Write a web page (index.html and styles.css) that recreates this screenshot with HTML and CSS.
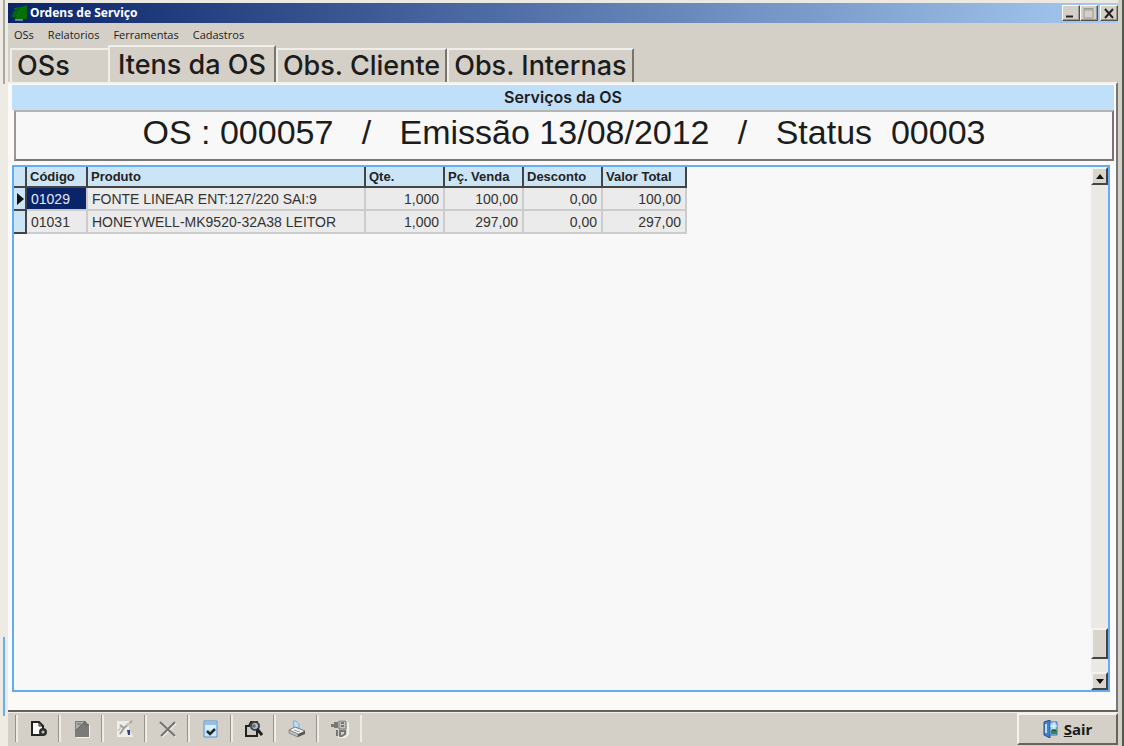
FILE: index.html
```html
<!DOCTYPE html>
<html lang="pt-BR">
<head>
    <meta charset="UTF-8">
    <meta name="viewport" content="width=device-width, initial-scale=1.0">
    <title>Ordens de Serviço</title>
    <link rel="stylesheet" href="styles.css">
</head>
<body>
    <div class="gutter">
        <div class="gutter-top"></div>
        <div class="gutter-mark"></div>
    </div>
    <div class="window">
        <header class="titlebar">
            <svg class="app-icon" width="16" height="16" viewBox="0 0 16 16">
                <path d="M2 3 L9 2 L15 0 V14 H11 L9 15 H4 L3 12 H0 L1 7 L3 6 Z" fill="#087008"/>
                <path d="M4 4 V9 M1 8 L4 12 M7 3 L5 6" stroke="#064b18" fill="none"/>
                <path d="M3 15 H11" stroke="#c8cbb8"/>
            </svg>
            <h1>Ordens de Serviço</h1>
            <div class="window-controls">
                <button type="button" aria-label="Minimizar"><svg width="14" height="12" viewBox="0 0 14 12"><path d="M3 9.500 H10" stroke="#222" stroke-width="2"/></svg></button>
                <button type="button" aria-label="Maximizar"><svg width="14" height="12" viewBox="0 0 14 12"><path d="M3 1.500 H12 V11 H3 Z M3 3 H12" stroke="#99968f" fill="none"/></svg></button>
                <button type="button" class="close" aria-label="Fechar"><svg width="14" height="12" viewBox="0 0 14 12"><path d="M4 2 L12 11 M12 2 L4 11" stroke="#222" stroke-width="2"/></svg></button>
            </div>
        </header>

        <nav class="menu">
            <button type="button">OSs</button>
            <button type="button">Relatorios</button>
            <button type="button">Ferramentas</button>
            <button type="button">Cadastros</button>
        </nav>

        <div class="tabs" role="tablist">
            <button type="button" class="tab tab-first" role="tab">OSs</button>
            <button type="button" class="tab active" role="tab" aria-selected="true">Itens da OS</button>
            <button type="button" class="tab" role="tab">Obs. Cliente</button>
            <button type="button" class="tab" role="tab">Obs. Internas</button>
        </div>

        <main class="page">
            <h2 class="section-title">Serviços da OS</h2>
            <div class="os-info">OS : 000057   /   Emissão 13/08/2012   /   Status  00003</div>

            <div class="grid">
                <div class="grid-view">
                    <table>
                        <colgroup>
                            <col class="col-mark">
                            <col class="col-codigo">
                            <col class="col-produto">
                            <col class="col-valor">
                            <col class="col-valor">
                            <col class="col-valor">
                            <col class="col-total">
                        </colgroup>
                        <thead>
                            <tr>
                                <th></th>
                                <th>Código</th>
                                <th>Produto</th>
                                <th>Qte.</th>
                                <th>Pç. Venda</th>
                                <th>Desconto</th>
                                <th>Valor Total</th>
                            </tr>
                        </thead>
                        <tbody>
                            <tr>
                                <td class="mark"><svg width="7" height="12" viewBox="0 0 7 12"><path d="M0 0 L7 6 L0 12 Z" fill="#111"/></svg></td>
                                <td class="selected">01029</td>
                                <td>FONTE LINEAR ENT:127/220 SAI:9</td>
                                <td class="num">1,000</td>
                                <td class="num">100,00</td>
                                <td class="num">0,00</td>
                                <td class="num">100,00</td>
                            </tr>
                            <tr>
                                <td class="mark"></td>
                                <td>01031</td>
                                <td>HONEYWELL-MK9520-32A38 LEITOR</td>
                                <td class="num">1,000</td>
                                <td class="num">297,00</td>
                                <td class="num">0,00</td>
                                <td class="num">297,00</td>
                            </tr>
                        </tbody>
                    </table>
                </div>
                <div class="scrollbar">
                    <button type="button" aria-label="Subir"><svg width="8" height="5" viewBox="0 0 8 5"><path d="M4 0 L8 5 H0 Z" fill="#111"/></svg></button>
                    <div class="track"><div class="thumb"></div></div>
                    <button type="button" aria-label="Descer"><svg width="8" height="5" viewBox="0 0 8 5"><path d="M0 0 H8 L4 5 Z" fill="#111"/></svg></button>
                </div>
            </div>
        </main>

        <footer class="toolbar">
            <div class="tools">
                <button type="button" aria-label="Novo"><svg width="18" height="18" viewBox="0 0 18 18">
                    <path d="M2 2 H9 L13 6 V15 H2 Z" fill="#fafafa" stroke="#222" stroke-width="2"/>
                    <path d="M9 2 V6 H13" fill="none" stroke="#222"/>
                    <circle cx="13" cy="12" r="4" fill="#2c2f2c"/>
                    <circle cx="13" cy="12" r="1.500" fill="#b9c2b4"/>
                </svg></button>
                <button type="button" aria-label="Alterar"><svg width="18" height="18" viewBox="0 0 18 18">
                    <path d="M2 1 H12 L16 5 V17 H2 Z" fill="#7b7b7b"/>
                    <path d="M3 2 H11 L3 10 Z" fill="#b3b0aa"/>
                    <path d="M4 4 H8 M3 10 L12 2 M12 1 V5 H16" stroke="#666" fill="none"/>
                    <path d="M16.500 5 V17.500 H3" stroke="#f4f2ee" fill="none"/>
                </svg></button>
                <button type="button" aria-label="Gravar"><svg width="18" height="18" viewBox="0 0 18 18">
                    <path d="M1 1 H15 L13 5 V10 L17 16 V17 H1 Z" fill="#eeeeec"/>
                    <path d="M4 5 L8 8 L16 1 M8 8 L4 14" stroke="#a49d92" stroke-width="2" fill="none"/>
                    <path d="M10 5 L14 3 M5 7 L2 11" stroke="#d2cbbc" stroke-width="2"/>
                    <path d="M11 10 L14 10 V15 H12 Z" fill="#343d8e"/>
                </svg></button>
                <button type="button" aria-label="Excluir"><svg width="18" height="18" viewBox="0 0 18 18">
                    <path d="M2 3 L17 17 M17 3 L3 17" stroke="#f1efea" stroke-width="2"/>
                    <path d="M1 2 L16 16 M16 2 L2 16" stroke="#737373" stroke-width="2"/>
                </svg></button>
                <button type="button" aria-label="Confirmar"><svg width="18" height="18" viewBox="0 0 18 18">
                    <path d="M2 1 H15 V17 H2 Z" fill="#c9e5ff" stroke="#5e8fc5"/>
                    <path d="M3 2 H14 V5 H3 Z" fill="#8dc1f5"/>
                    <path d="M4 6 H13 M4 8 H13" stroke="#f3faff"/>
                    <path d="M5 11 L8 14 L13 9" stroke="#1e2c24" stroke-width="2.500" fill="none"/>
                </svg></button>
                <button type="button" aria-label="Pesquisar"><svg width="18" height="18" viewBox="0 0 18 18">
                    <path d="M1 6 H4 L6 2 H12 V16 H1 Z" fill="#cecbc5" stroke="#222" stroke-width="2"/>
                    <circle cx="10" cy="6" r="4" fill="#abc0d8" stroke="#444" stroke-width="2"/>
                    <path d="M7 6 H11 M9 4 V8" stroke="#555"/>
                    <path d="M12 9 L17 15" stroke="#222" stroke-width="3"/>
                </svg></button>
                <button type="button" aria-label="Imprimir"><svg width="18" height="18" viewBox="0 0 18 18">
                    <path d="M5 1 H8 L11 4 V8 H6 Z" fill="#b7dcff" stroke="#75afe4"/>
                    <path d="M1 10 L7 7 L17 11 L11 15 Z" fill="#efefed" stroke="#777"/>
                    <path d="M1 10 V13 L10 17 V14 Z" fill="#c4c4c0" stroke="#888"/>
                    <path d="M10 14 L17 11 V14 L10 17 Z" fill="#555"/>
                    <path d="M6 10 L12 12" stroke="#999"/>
                </svg></button>
                <button type="button" aria-label="Transferir"><svg width="18" height="18" viewBox="0 0 18 18">
                    <path d="M8 1 H15 L17 4 V14 L14 17 H7" fill="none" stroke="#f2f0ec" stroke-width="2"/>
                    <path d="M0 4 H3 V2 H7 V8 H3 V7 H0 Z" fill="#777"/>
                    <path d="M8 1 H15 V9 H8 Z" fill="#c5c3be" stroke="#777"/>
                    <path d="M10 3 H13 M10 6 H13 M6 10 V16 M9 11 H14 V14 L11 16 H9 Z" fill="none" stroke="#777" stroke-width="2"/>
                </svg></button>
            </div>
            <button type="button" class="exit">
                <svg width="16" height="18" viewBox="0 0 16 18">
                    <path d="M1 2 L7 0 V18 L1 15 Z" fill="#477fbf" stroke="#244f91"/>
                    <path d="M7 2 H14 V15 H7 Z" fill="#a8d6fb" stroke="#3670b4"/>
                    <path d="M3 4 V13" stroke="#b9dfff" stroke-width="2"/>
                    <path d="M11 2 V9 M7 6 H14" stroke="#eef9ff"/>
                    <path d="M8 10 H14 V14 H8 Z" fill="#39864c"/>
                    <path d="M9 10 H13" stroke="#222"/>
                </svg>
                <span><u>S</u>air</span>
            </button>
        </footer>
    </div>
    <div class="edge"></div>
</body>
</html>
```
FILE: styles.css
```css
* {
    box-sizing: border-box;
}

body {
    margin: 0;
    height: 100vh;
    display: flex;
    background-color: #d4d0c8;
    color: #1c1c1c;
    font-family: "Liberation Sans", Arial, sans-serif;
    font-size: 14px;
    overflow: hidden;
}

button {
    margin: 0;
    padding: 0;
    border: none;
    background: none;
    color: inherit;
    font: inherit;
}

h1, h2 {
    margin: 0;
}

svg {
    display: block;
    flex-shrink: 0;
}

/* Strip of the window behind */
.gutter {
    flex: 0 0 8px;
    display: flex;
    flex-direction: column;
    justify-content: space-between;
    background-color: #eeebe5;
    padding-bottom: 30px;
}

.gutter-top {
    width: 5px;
    height: 84px;
    border-right: 2px solid #aaa7a0;
}

.gutter-mark {
    width: 5px;
    height: 79px;
    border-right: 2px solid #68aef5;
}

.edge {
    flex: 0 0 6px;
    background-color: #d4d0c8;
    border-right: 2px solid #555;
}

.window {
    flex: 1;
    min-width: 0;
    display: flex;
    flex-direction: column;
    border-top: 3px solid #ece9e3;
}

.titlebar {
    height: 20px;
    display: flex;
    align-items: center;
    gap: 2px;
    padding: 0 0 0 4px;
    background: linear-gradient(to right, #0a246a, #a6caf0);
    color: #fff;
}

.titlebar h1 {
    flex: 1;
    font-family: "Noto Sans", "Open Sans", sans-serif;
    font-size: 12px;
    line-height: 20px;
}

.window-controls {
    display: flex;
}

.window-controls button {
    width: 18px;
    height: 16px;
    background-color: #d4d0c8;
    border: 1px solid;
    border-color: #fff #55524d #55524d #fff;
    box-shadow: inset -1px -1px #99968f;
}

.window-controls .close {
    margin-left: 2px;
}

.menu {
    height: 22px;
    display: flex;
    gap: 14px;
    padding: 0 6px;
    font-family: "Open Sans", "Noto Sans", sans-serif;
    font-size: 11px;
    font-weight: 500;
}

.tabs {
    height: 37px;
    display: flex;
    align-items: flex-end;
    padding-left: 2px;
    font-family: Inter, "Liberation Sans", sans-serif;
    font-size: 27px;
    font-weight: 500;
}

.tab {
    height: 34px;
    padding: 0 5px;
    border-top: 2px solid #f0eee9;
    border-left: 2px solid #f0eee9;
    border-right: 2px solid #77746e;
    line-height: 30px;
    text-align: left;
    white-space: nowrap;
}

.tab-first {
    width: 98px;
    border-right: none;
}

.tab.active {
    height: 37px;
    padding: 0 8px;
}

.page {
    flex: 1;
    min-height: 0;
    display: flex;
    flex-direction: column;
    padding: 1px 2px 18px 4px;
    background-color: #fbfaf8;
    border-top: 2px solid #f4f2ee;
    border-right: 2px solid #777;
}

.section-title {
    flex: 0 0 25px;
    background-color: #c0dff8;
    font-family: Inter, "Liberation Sans", sans-serif;
    font-size: 16px;
    font-weight: 600;
    line-height: 25px;
    text-align: center;
}

.os-info {
    flex: 0 0 51px;
    margin: 0 0 4px 2px;
    background-color: #f8f8f8;
    border: 2px solid #777;
    border-top-color: #b6b4b0;
    border-left-color: #9a9893;
    font-size: 34px;
    line-height: 40px;
    text-align: center;
    white-space: pre;
}

.grid {
    flex: 1;
    min-height: 0;
    display: flex;
    margin-right: 4px;
    border: 2px solid #62adf5;
    background-color: #f8f8f8;
}

.grid-view {
    flex: 1;
    overflow: hidden;
}

table {
    width: 673px;
    table-layout: fixed;
    border-collapse: separate;
    border-spacing: 0;
    color: #333;
    font-size: 14px;
    white-space: nowrap;
}

.col-mark {
    width: 13px;
}

.col-codigo {
    width: 61px;
}

.col-produto {
    width: 278px;
}

.col-valor {
    width: 79px;
}

.col-total {
    width: 84px;
}

th {
    height: 21px;
    padding: 0 3px;
    background-color: #cce5f6;
    border-right: 2px solid #444;
    border-bottom: 2px solid #444;
    color: #222;
    font-size: 13px;
    line-height: 18px;
    text-align: left;
}

td {
    height: 23px;
    padding: 0 4px;
    background-color: #ebebeb;
    border-right: 2px solid #ccc;
    border-bottom: 2px solid #ccc;
    line-height: 20px;
}

td.selected {
    background-color: #0a246a;
    color: #e4eaf7;
}

td.num {
    text-align: right;
}

td.mark {
    padding: 0 0 0 3px;
    background-color: #cce5f6;
    border-color: #444;
}

/* Scrollbar */
.scrollbar {
    width: 17px;
    display: flex;
    flex-direction: column;
    background-color: #ebe9e5;
}

.scrollbar button,
.thumb {
    background-color: #d9d5cd;
    border: 2px solid;
    border-color: #f5f3ef #444 #444 #f5f3ef;
}

.scrollbar button {
    height: 18px;
    display: flex;
    align-items: center;
    justify-content: center;
}

.track {
    flex: 1;
    display: flex;
    flex-direction: column;
    justify-content: flex-end;
    padding-bottom: 13px;
}

.thumb {
    height: 31px;
}

.toolbar {
    height: 36px;
    display: flex;
    justify-content: space-between;
    border-top: 2px solid #66635e;
    box-shadow: inset 0 1px #f0eee9;
}

.tools {
    display: flex;
    padding: 3px 0 4px 8px;
}

.tools button {
    width: 43px;
    display: flex;
    align-items: center;
    justify-content: center;
    border-left: 2px solid #eeece7;
    box-shadow: -1px 0 #96938d;
}

.tools button:last-child {
    width: 45px;
    border-right: 2px solid #eeece7;
}

.exit {
    width: 101px;
    height: 32px;
    margin-top: 1px;
    display: flex;
    align-items: center;
    justify-content: center;
    gap: 5px;
    border: 2px solid;
    border-color: #f5f3ef #66635e #66635e #f5f3ef;
    font-family: "Noto Sans", "Open Sans", sans-serif;
    font-size: 15px;
    font-weight: bold;
}
```
